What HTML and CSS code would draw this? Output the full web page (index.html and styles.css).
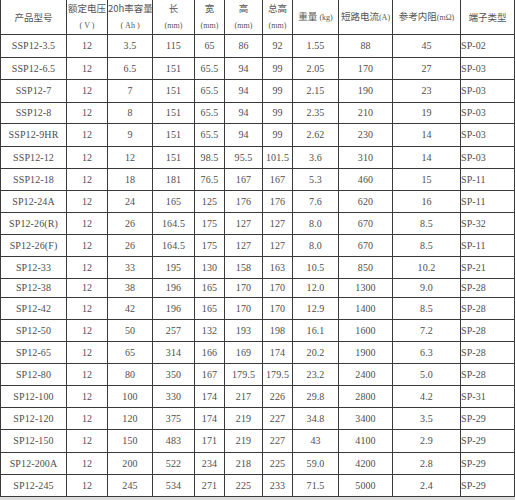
FILE: index.html
```html
<!DOCTYPE html>
<html lang="zh-CN">
<head>
<meta charset="utf-8">
<title>电池参数表</title>
<link rel="stylesheet" href="styles.css">
</head>
<body>
<table class="spec">
  <colgroup>
    <col class="c-model"><col class="c-v"><col class="c-ah"><col class="c-l"><col class="c-w"><col class="c-h"><col class="c-th"><col class="c-kg"><col class="c-a"><col class="c-r"><col class="c-t">
  </colgroup>
  <thead>
    <tr class="head">
      <th>产品型号</th>
      <th>额定电压<br><span class="unit">( V )</span></th>
      <th>20h率容量<br><span class="unit">( Ah )</span></th>
      <th>长<br><span class="unit">(mm)</span></th>
      <th>宽<br><span class="unit">(mm)</span></th>
      <th>高<br><span class="unit">(mm)</span></th>
      <th>总高<br><span class="unit">(mm)</span></th>
      <th>重量 <span class="unit">(kg)</span></th>
      <th>短路电流<span class="unit">(A)</span></th>
      <th>参考内阻<span class="unit">(mΩ)</span></th>
      <th>端子类型</th>
    </tr>
  </thead>
  <tbody>
    <tr class="h23"><td>SSP12-3.5</td><td>12</td><td>3.5</td><td>115</td><td>65</td><td>86</td><td>92</td><td>1.55</td><td>88</td><td>45</td><td class="type">SP-02</td></tr>
    <tr><td>SSP12-6.5</td><td>12</td><td>6.5</td><td>151</td><td>65.5</td><td>94</td><td>99</td><td>2.05</td><td>170</td><td>27</td><td class="type">SP-03</td></tr>
    <tr class="h23"><td>SSP12-7</td><td>12</td><td>7</td><td>151</td><td>65.5</td><td>94</td><td>99</td><td>2.15</td><td>190</td><td>23</td><td class="type">SP-03</td></tr>
    <tr class="h21"><td>SSP12-8</td><td>12</td><td>8</td><td>151</td><td>65.5</td><td>94</td><td>99</td><td>2.35</td><td>210</td><td>19</td><td class="type">SP-03</td></tr>
    <tr class="h23"><td>SSP12-9HR</td><td>12</td><td>9</td><td>151</td><td>65.5</td><td>94</td><td>99</td><td>2.62</td><td>230</td><td>14</td><td class="type">SP-03</td></tr>
    <tr><td>SSP12-12</td><td>12</td><td>12</td><td>151</td><td>98.5</td><td>95.5</td><td>101.5</td><td>3.6</td><td>310</td><td>14</td><td class="type">SP-03</td></tr>
    <tr><td>SSP12-18</td><td>12</td><td>18</td><td>181</td><td>76.5</td><td>167</td><td>167</td><td>5.3</td><td>460</td><td>15</td><td class="type">SP-11</td></tr>
    <tr><td>SP12-24A</td><td>12</td><td>24</td><td>165</td><td>125</td><td>176</td><td>176</td><td>7.6</td><td>620</td><td>16</td><td class="type">SP-11</td></tr>
    <tr><td>SP12-26(R)</td><td>12</td><td>26</td><td>164.5</td><td>175</td><td>127</td><td>127</td><td>8.0</td><td>670</td><td>8.5</td><td class="type">SP-32</td></tr>
    <tr><td>SP12-26(F)</td><td>12</td><td>26</td><td>164.5</td><td>175</td><td>127</td><td>127</td><td>8.0</td><td>670</td><td>8.5</td><td class="type">SP-11</td></tr>
    <tr><td>SP12-33</td><td>12</td><td>33</td><td>195</td><td>130</td><td>158</td><td>163</td><td>10.5</td><td>850</td><td>10.2</td><td class="type">SP-21</td></tr>
    <tr class="h19"><td>SP12-38</td><td>12</td><td>38</td><td>196</td><td>165</td><td>170</td><td>170</td><td>12.0</td><td>1300</td><td>9.0</td><td class="type">SP-28</td></tr>
    <tr><td>SP12-42</td><td>12</td><td>42</td><td>196</td><td>165</td><td>170</td><td>170</td><td>12.9</td><td>1400</td><td>8.5</td><td class="type">SP-28</td></tr>
    <tr><td>SP12-50</td><td>12</td><td>50</td><td>257</td><td>132</td><td>193</td><td>198</td><td>16.1</td><td>1600</td><td>7.2</td><td class="type">SP-28</td></tr>
    <tr><td>SP12-65</td><td>12</td><td>65</td><td>314</td><td>166</td><td>169</td><td>174</td><td>20.2</td><td>1900</td><td>6.3</td><td class="type">SP-28</td></tr>
    <tr><td>SP12-80</td><td>12</td><td>80</td><td>350</td><td>167</td><td>179.5</td><td>179.5</td><td>23.2</td><td>2400</td><td>5.0</td><td class="type">SP-28</td></tr>
    <tr><td>SP12-100</td><td>12</td><td>100</td><td>330</td><td>174</td><td>217</td><td>226</td><td>29.8</td><td>2800</td><td>4.2</td><td class="type">SP-31</td></tr>
    <tr><td>SP12-120</td><td>12</td><td>120</td><td>375</td><td>174</td><td>219</td><td>227</td><td>34.8</td><td>3400</td><td>3.5</td><td class="type">SP-29</td></tr>
    <tr class="h23"><td>SP12-150</td><td>12</td><td>150</td><td>483</td><td>171</td><td>219</td><td>227</td><td>43</td><td>4100</td><td>2.9</td><td class="type">SP-29</td></tr>
    <tr><td>SP12-200A</td><td>12</td><td>200</td><td>522</td><td>234</td><td>218</td><td>225</td><td>59.0</td><td>4200</td><td>2.8</td><td class="type">SP-29</td></tr>
    <tr><td>SP12-245</td><td>12</td><td>245</td><td>534</td><td>271</td><td>225</td><td>233</td><td>71.5</td><td>5000</td><td>2.4</td><td class="type">SP-29</td></tr>
  </tbody>
</table>
</body>
</html>
```

FILE: styles.css
```css
html, body {
  margin: 0;
  padding: 0;
}
body {
  background: #dcdcdc;
  width: 515px;
  height: 500px;
  overflow: hidden;
}
.spec {
  border-collapse: collapse;
  table-layout: fixed;
  width: 514px;
  background: #ffffff;
  color: #4e4e4e;
  font-family: "Liberation Serif", "Noto Sans CJK SC", serif;
  font-size: 10px;
}
.c-model { width: 66px; }
.c-v { width: 41px; }
.c-ah { width: 45px; }
.c-l { width: 42px; }
.c-w { width: 30px; }
.c-h { width: 38px; }
.c-th { width: 30px; }
.c-kg { width: 46px; }
.c-a { width: 54px; }
.c-r { width: 68px; }
.c-t { width: 54px; }

.spec th,
.spec td {
  border: 1px solid #3a3a3a;
  padding: 0;
  text-align: center;
  vertical-align: middle;
  white-space: nowrap;
  overflow: visible;
}
.spec th {
  border-top: none;
  height: 33px;
  font-family: "Noto Sans CJK SC", sans-serif;
  font-weight: normal;
  font-size: 9.5px;
  line-height: 16px;
  color: #555555;
}
.spec th .unit {
  font-size: 8px;
  font-family: "Liberation Serif", "Noto Sans CJK SC", serif;
}
.spec td {
  height: 21px;
  line-height: 10px;
  letter-spacing: 0.1px;
}
.spec tr.h23 td { height: 22px; }
.spec tr.h21 td { height: 20px; }
.spec tr.h19 td { height: 18px; }
.spec td.type {
  text-align: left;
}
```
